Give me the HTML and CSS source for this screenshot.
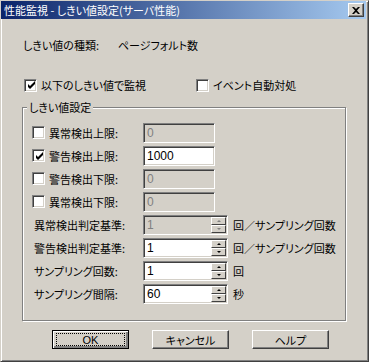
FILE: index.html
```html
<!DOCTYPE html>
<html lang="ja">
<head>
    <meta charset="UTF-8">
    <title>性能監視 - しきい値設定(サーバ性能)</title>
    <link rel="stylesheet" href="styles.css">
</head>
<body>
    <div class="window">
        <!-- Title bar -->
        <div class="titlebar">
            <span class="title">性能監視 - しきい値設定(サーバ性能)</span>
            <span class="close-btn">
                <svg width="8" height="7" viewBox="0 0 8 7"><path d="M0 0h2l2 2 2-2h2L5 3.5 8 7H6L4 5 2 7H0l3-3.5z" fill="#000"/></svg>
            </span>
        </div>

        <!-- Threshold type -->
        <div class="info-row">
            <span class="info-label">しきい値の種類:</span>
            <span>ページフォルト数</span>
        </div>

        <!-- Top options -->
        <div class="option-row">
            <label class="option">
                <span class="check checked"><svg width="9" height="9" viewBox="0 0 9 9"><path d="M1 3v3l2 2 5-5V0L3 5z" fill="#000"/></svg></span>
                以下のしきい値で監視
            </label>
            <label class="option">
                <span class="check"></span>
                イベント自動対処
            </label>
        </div>

        <!-- Threshold settings group -->
        <div class="groupbox">
            <span class="group-title">しきい値設定</span>

            <div class="field-row">
                <label class="field-check"><span class="check"></span>異常検出上限:</label>
                <span class="edit disabled">0</span>
            </div>
            <div class="field-row">
                <label class="field-check"><span class="check checked"><svg width="9" height="9" viewBox="0 0 9 9"><path d="M1 3v3l2 2 5-5V0L3 5z" fill="#000"/></svg></span>警告検出上限:</label>
                <span class="edit">1000</span>
            </div>
            <div class="field-row">
                <label class="field-check"><span class="check"></span>警告検出下限:</label>
                <span class="edit disabled">0</span>
            </div>
            <div class="field-row">
                <label class="field-check"><span class="check"></span>異常検出下限:</label>
                <span class="edit disabled">0</span>
            </div>

            <div class="field-row">
                <span class="field-label">異常検出判定基準:</span>
                <span class="spin disabled">
                    <span class="spin-text">1</span>
                    <span class="spin-btns">
                        <span class="spin-btn"><i class="arrow-up"></i></span>
                        <span class="spin-btn"><i class="arrow-down"></i></span>
                    </span>
                </span>
                <span class="unit">回／サンプリング回数</span>
            </div>
            <div class="field-row">
                <span class="field-label">警告検出判定基準:</span>
                <span class="spin">
                    <span class="spin-text">1</span>
                    <span class="spin-btns">
                        <span class="spin-btn"><i class="arrow-up"></i></span>
                        <span class="spin-btn"><i class="arrow-down"></i></span>
                    </span>
                </span>
                <span class="unit">回／サンプリング回数</span>
            </div>
            <div class="field-row">
                <span class="field-label">サンプリング回数:</span>
                <span class="spin">
                    <span class="spin-text">1</span>
                    <span class="spin-btns">
                        <span class="spin-btn"><i class="arrow-up"></i></span>
                        <span class="spin-btn"><i class="arrow-down"></i></span>
                    </span>
                </span>
                <span class="unit">回</span>
            </div>
            <div class="field-row">
                <span class="field-label">サンプリング間隔:</span>
                <span class="spin">
                    <span class="spin-text">60</span>
                    <span class="spin-btns">
                        <span class="spin-btn"><i class="arrow-up"></i></span>
                        <span class="spin-btn"><i class="arrow-down"></i></span>
                    </span>
                </span>
                <span class="unit">秒</span>
            </div>
        </div>

        <!-- Dialog buttons -->
        <div class="button-row">
            <span class="button default"><span class="focus">OK</span></span>
            <span class="button">キャンセル</span>
            <span class="button">ヘルプ</span>
        </div>
    </div>
</body>
</html>
```

FILE: styles.css
```css
body {
    margin: 0;
    font-family: "Noto Sans CJK JP", sans-serif;
    font-size: 11px;
    font-feature-settings: "palt";
    color: #000;
    background: #d4d0c8;
}
/* Window frame */
.window {
    width: 369px;
    height: 362px;
    box-sizing: border-box;
    background: #d4d0c8;
    border: 1px solid;
    border-color: #d4d0c8 #404040 #404040 #d4d0c8;
    box-shadow: inset 1px 1px #fff, inset -1px -1px #808080;
}
.titlebar {
    height: 18px;
    margin-right: 2px;
    display: flex;
    align-items: center;
    justify-content: space-between;
    padding: 0 2px 0 3px;
    background: linear-gradient(to right, #0a246a, #a6caf0);
    color: #fff;
    line-height: 18px;
}
.close-btn {
    width: 16px;
    height: 14px;
    box-sizing: border-box;
    display: flex;
    align-items: center;
    justify-content: center;
    background: #d4d0c8;
    border: 1px solid;
    border-color: #fff #404040 #404040 #fff;
    box-shadow: inset -1px -1px #808080;
}
/* Top rows */
.info-row {
    display: flex;
    margin-top: 18px;
    padding-left: 22px;
    line-height: 16px;
}
.info-label {
    width: 95px;
}
.option-row {
    display: flex;
    margin-top: 24px;
    padding-left: 23px;
    line-height: 16px;
}
.option {
    display: flex;
    align-items: center;
    gap: 4px;
}
.option:first-child {
    width: 172px;
}
.check {
    width: 13px;
    height: 13px;
    box-sizing: border-box;
    display: inline-flex;
    align-items: center;
    justify-content: center;
    background: #fff;
    border: 1px solid;
    border-color: #808080 #fff #fff #808080;
    box-shadow: inset 1px 1px #404040, inset -1px -1px #d4d0c8;
}
.check svg {
    margin: 1px 0 0 1px;
}
/* Group box */
.groupbox {
    position: relative;
    width: 324px;
    height: 214px;
    box-sizing: border-box;
    margin: 14px 0 0 21px;
    padding: 13px 0 0 9px;
    border: 1px solid #808080;
    box-shadow: inset 1px 1px #fff, 1px 1px #fff;
}
.group-title {
    position: absolute;
    top: -9px;
    left: 4px;
    padding: 0 2px;
    background: #d4d0c8;
    line-height: 16px;
}
.field-row {
    display: flex;
    align-items: center;
    height: 23px;
}
.field-check {
    display: flex;
    align-items: center;
    gap: 4px;
    width: 111px;
}
.field-label {
    width: 109px;
    padding-left: 2px;
}
.edit, .spin-text {
    width: 72px;
    height: 20px;
    box-sizing: border-box;
    padding-left: 3px;
    background: #fff;
    border: 1px solid;
    border-color: #808080 #fff #fff #808080;
    box-shadow: inset 1px 1px #404040, inset -1px -1px #d4d0c8;
    font-family: "Liberation Sans", sans-serif;
    font-size: 12px;
    line-height: 18px;
}
.edit.disabled, .spin.disabled .spin-text {
    background: #d4d0c8;
    color: #808080;
}
.spin {
    display: flex;
}
.spin-text {
    width: 85px;
}
.spin-btns {
    display: flex;
    flex-direction: column;
    margin: 2px 0 2px -17px;
    width: 15px;
}
.spin-btn {
    height: 8px;
    box-sizing: border-box;
    display: flex;
    align-items: center;
    justify-content: center;
    background: #d4d0c8;
    border: 1px solid;
    border-color: #fff #404040 #404040 #fff;
}
.arrow-up, .arrow-down {
    width: 0;
    height: 0;
    border-left: 2px solid transparent;
    border-right: 2px solid transparent;
}
.arrow-up {
    border-bottom: 2px solid #000;
}
.arrow-down {
    border-top: 2px solid #000;
}
.spin.disabled .arrow-up {
    border-bottom-color: #808080;
}
.spin.disabled .arrow-down {
    border-top-color: #808080;
}
.unit {
    margin-left: 7px;
}
/* Buttons */
.button-row {
    display: flex;
    gap: 23px;
    margin: 9px 0 0 51px;
}
.button {
    width: 77px;
    height: 19px;
    box-sizing: border-box;
    display: flex;
    align-items: center;
    justify-content: center;
    background: #d4d0c8;
    border: 1px solid;
    border-color: #fff #404040 #404040 #fff;
    box-shadow: inset -1px -1px #808080;
}
.button.default {
    border: 1px solid #000;
    box-shadow: inset 1px 1px #fff, inset -2px -2px #808080;
}
.focus {
    width: 67px;
    height: 11px;
    display: flex;
    align-items: center;
    justify-content: center;
    border: 1px dotted #000;
    font-family: "Liberation Sans", sans-serif;
}
```
